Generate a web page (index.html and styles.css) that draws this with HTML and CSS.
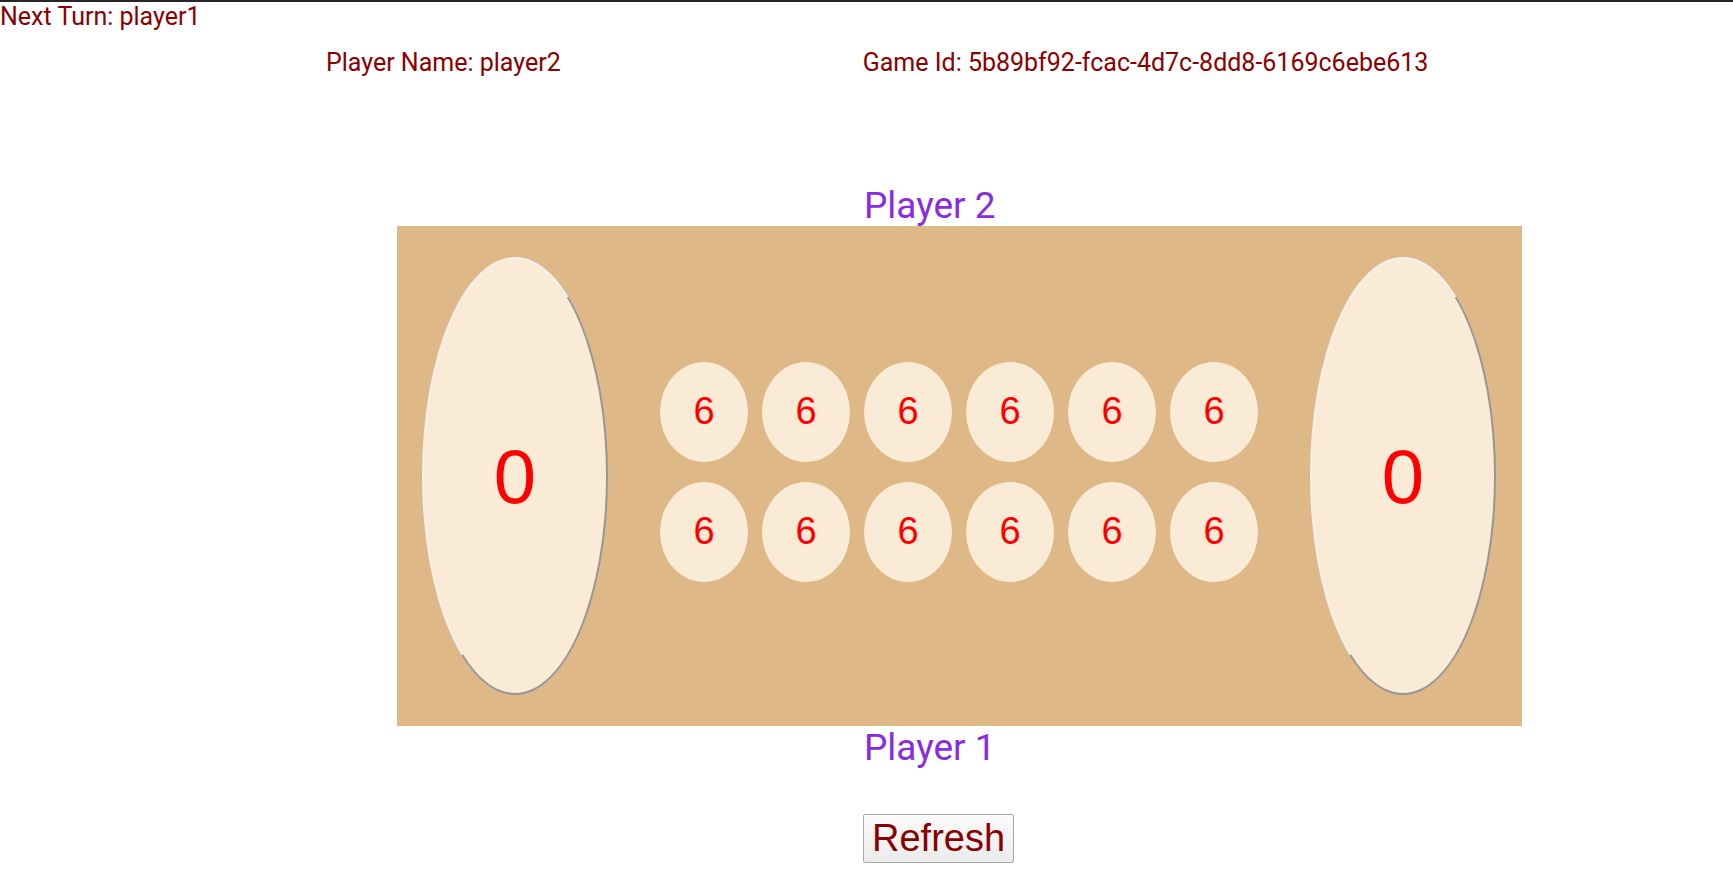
FILE: index.html
```html
<!DOCTYPE html>
<html>
<head>
<meta charset="utf-8">
<link rel="stylesheet" href="styles.css">
</head>
<body>
<div class="topbar"></div>
<div class="turn">Next Turn: player1</div>
<div class="info">
  <div class="info-item">Player Name: player2</div>
  <div class="info-item">Game Id: 5b89bf92-fcac-4d7c-8dd8-6169c6ebe613</div>
</div>
<div class="label label-top">Player 2</div>
<div class="board">
  <div class="store">0</div>
  <div class="pits">
    <div class="pit">6</div><div class="pit">6</div><div class="pit">6</div><div class="pit">6</div><div class="pit">6</div><div class="pit">6</div>
    <div class="pit">6</div><div class="pit">6</div><div class="pit">6</div><div class="pit">6</div><div class="pit">6</div><div class="pit">6</div>
  </div>
  <div class="store">0</div>
</div>
<div class="label label-bottom">Player 1</div>
<div class="actions">
  <button class="refresh">Refresh</button>
</div>
</body>
</html>
```
FILE: styles.css
```css
html, body {
  margin: 0;
  padding: 0;
  background: #ffffff;
}
body {
  font-family: Roboto, "Liberation Sans", sans-serif;
  font-size: 25px;
  color: #8b0000;
}
.topbar {
  height: 2px;
  background: #262626;
}
.turn {
  line-height: 28px;
  padding-top: 1px;
}
.info {
  display: flex;
  gap: 302px;
  padding-left: 326px;
  margin-top: 18px;
  line-height: 28px;
}
.label {
  font-size: 37px;
  line-height: 41px;
  color: #8a2be2;
  padding-left: 864px;
}
.label-top {
  margin-top: 108px;
}
.label-bottom {
  margin-top: 1px;
}
.board {
  margin-left: 397px;
  width: 1125px;
  height: 500px;
  background: #deb887;
  display: flex;
  align-items: center;
  justify-content: space-between;
  padding: 0 26px 0 25px;
  box-sizing: border-box;
}
.store {
  width: 186px;
  height: 438px;
  box-sizing: border-box;
  border-radius: 50%;
  background: #faebd7;
  border: 2px solid;
  border-color: #f0f0f0 #969696 #969696 #f0f0f0;
  display: flex;
  align-items: center;
  justify-content: center;
  font-family: "Liberation Sans", Arial, sans-serif;
  font-size: 76px;
  color: #ff0000;
}
.pits {
  display: grid;
  grid-template-columns: repeat(6, 88px);
  grid-auto-rows: 100px;
  column-gap: 14px;
  row-gap: 20px;
  margin-bottom: 9px;
}
.pit {
  border-radius: 50%;
  background: #faebd7;
  display: flex;
  align-items: center;
  justify-content: center;
  font-family: "Liberation Sans", Arial, sans-serif;
  font-size: 38px;
  color: #ff0000;
}
.actions {
  padding-left: 863px;
  margin-top: 46px;
}
.refresh {
  font-family: "Liberation Sans", Arial, sans-serif;
  font-size: 38px;
  color: #8b0000;
  padding: 1px 8px;
  height: 49px;
  border: 1px solid #a9a9a9;
  border-radius: 2px;
  background: linear-gradient(#fbfbfb, #ebebeb);
}
```
